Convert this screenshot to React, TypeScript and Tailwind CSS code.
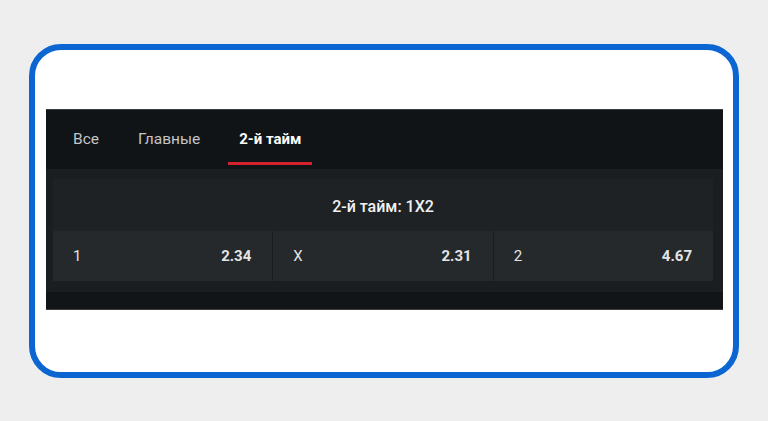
import { useState } from "react";

const tabs = ["Все", "Главные", "2-й тайм"];

const odds = [
  { label: "1", value: "2.34" },
  { label: "X", value: "2.31" },
  { label: "2", value: "4.67" },
];

export default function App() {
  const [active, setActive] = useState(2);

  return (
    <div
      className="h-[421px] w-[768px] overflow-hidden bg-[#eeeeee] pt-[44px]"
      style={{ fontFamily: "Roboto, 'Noto Sans', sans-serif" }}
    >
      <div className="mx-[29px] h-[334px] rounded-[32px] border-[6px] border-[#0b66d2] bg-white pl-[11px] pr-[10px] pt-[59px]">
        <section className="flex h-[201px] flex-col border-y border-[#3a3c3e] bg-[#111416]">
          <nav className="flex h-[59px] gap-[17px] pl-[16px]">
            {tabs.map((t, i) => {
              const isActive = i === active;
              return (
                <button
                  key={t}
                  onClick={() => setActive(i)}
                  className={`relative flex flex-col justify-start px-[11px] pt-[19px] leading-[20px] ${
                    isActive ? "text-[15px] font-bold text-white" : "text-[15.5px] text-[#c4c6c8]"
                  }`}
                >
                  {t}
                  {isActive && (
                    <span className="absolute bottom-[4px] left-0 h-[3px] w-full bg-[#d3212d]" />
                  )}
                </button>
              );
            })}
          </nav>
          <div className="flex flex-1 flex-col bg-[#121517]">
            <div className="bg-[#1b1e20] pb-[11px] pl-[7px] pr-[10px] pt-[10px]">
              <div className="flex flex-col bg-[#1f2224]">
                <h3 className="flex h-[52px] items-center justify-center pt-[3px] text-[16px] font-medium text-[#f2f2f2]">
                  2-й тайм: 1X2
                </h3>
                <div className="grid h-[50px] grid-cols-3 gap-px bg-[#1a1d1f]">
                  {odds.map((o) => (
                    <div
                      key={o.label}
                      className="flex items-center justify-between bg-[#25292b] pl-[20px] pr-[21px] text-[15px] text-[#e4e4e4]"
                    >
                      <span>{o.label}</span>
                      <span className="font-bold">{o.value}</span>
                    </div>
                  ))}
                </div>
              </div>
            </div>
          </div>
        </section>
      </div>
    </div>
  );
}
